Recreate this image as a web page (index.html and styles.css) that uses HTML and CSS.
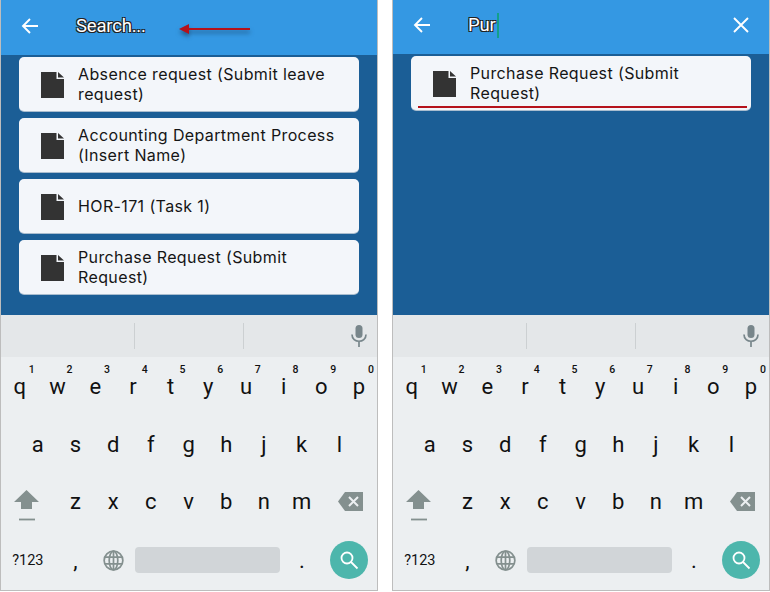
FILE: index.html
```html
<!DOCTYPE html>
<html>
	<head>
		<meta name="viewport" content="width=device-width, initial-scale=1.0">
		<title>Search forms</title>
		<link rel="stylesheet" href="styles.css">
	</head>
	<body>
	<div class="screens">

		<!-- empty search -->
		<div class="phone">
			<div class="top_bar tall_bar">
				<svg class="back_icon" viewBox="0 0 18 18"><path d="M17 9H2M9 2 2 9l7 7" fill="none" stroke="#fff" stroke-width="1.9"/></svg>
				<span class="search_text">Search...</span>
			</div>
			<svg class="red_arrow" viewBox="0 0 72 10"><path d="M71 5H8" stroke="#b5121b" stroke-width="1.8"/><path d="M0 5 10 0v10z" fill="#b5121b"/></svg>
			<div class="list_area">
				<div class="form_card"><svg class="doc_icon" viewBox="0 0 23 26"><path d="M0 0h15.5v7H23v19H0zM17 0l6 5.5h-6z" fill="#333"/></svg><span>Absence request (Submit leave request)</span></div>
				<div class="form_card"><svg class="doc_icon" viewBox="0 0 23 26"><path d="M0 0h15.5v7H23v19H0zM17 0l6 5.5h-6z" fill="#333"/></svg><span>Accounting Department Process (Insert Name)</span></div>
				<div class="form_card"><svg class="doc_icon" viewBox="0 0 23 26"><path d="M0 0h15.5v7H23v19H0zM17 0l6 5.5h-6z" fill="#333"/></svg><span>HOR-171 (Task 1)</span></div>
				<div class="form_card"><svg class="doc_icon" viewBox="0 0 23 26"><path d="M0 0h15.5v7H23v19H0zM17 0l6 5.5h-6z" fill="#333"/></svg><span>Purchase Request (Submit Request)</span></div>
			</div>
			<div class="keyboard">
				<div class="suggest_bar">
					<span class="suggest_cell first_cell"></span><span class="suggest_cell second_cell"></span>
					<span class="suggest_cell"><svg class="mic_icon" viewBox="0 0 16 22"><rect x="4.5" y="0" width="7" height="13" rx="3.5" fill="#78868b"/><path d="M1 9.5c0 9 14 9 14 0M8 16v6" fill="none" stroke="#78868b" stroke-width="1.7"/></svg></span>
				</div>
				<div class="key_row">
					<span class="key"><sup>1</sup>q</span><span class="key"><sup>2</sup>w</span><span class="key"><sup>3</sup>e</span><span class="key"><sup>4</sup>r</span><span class="key"><sup>5</sup>t</span><span class="key"><sup>6</sup>y</span><span class="key"><sup>7</sup>u</span><span class="key"><sup>8</sup>i</span><span class="key"><sup>9</sup>o</span><span class="key"><sup>0</sup>p</span>
				</div>
				<div class="key_row middle_row">
					<span class="key">a</span><span class="key">s</span><span class="key">d</span><span class="key">f</span><span class="key">g</span><span class="key">h</span><span class="key">j</span><span class="key">k</span><span class="key">l</span>
				</div>
				<div class="key_row third_row">
					<span class="key wide_left"><svg class="shift_icon" viewBox="0 0 25 31"><path d="M12.5 0 25 12h-7v7H7v-7H0z" fill="#84908f"/><path d="M5 29.5h16" stroke="#84908f" stroke-width="1.8"/></svg></span>
					<span class="key">z</span><span class="key">x</span><span class="key">c</span><span class="key">v</span><span class="key">b</span><span class="key">n</span><span class="key">m</span>
					<span class="key wide_right"><svg class="del_icon" viewBox="0 0 25 19"><path d="M7 0h18v19H7L0 9.5z" fill="#84908f"/><path d="m11 5 9 9m0-9-9 9" stroke="#eceff1" stroke-width="2"/></svg></span>
				</div>
				<div class="key_row bottom_row">
					<span class="key wide_left small_key">?123</span>
					<span class="key">,</span>
					<span class="key"><svg class="globe_icon" viewBox="0 0 22 22"><g fill="none" stroke="#84908f" stroke-width="1.8"><circle cx="11" cy="11" r="9.8"/><ellipse cx="11" cy="11" rx="4.5" ry="9.8"/><path d="M11 1v20M2 7.5h18M2 14.5h18"/></g></svg></span>
					<span class="space_key"></span>
					<span class="key">.</span>
					<span class="key search_key"><span class="search_btn"><svg viewBox="0 0 20 20"><circle cx="8" cy="8" r="5.5" fill="none" stroke="#fff" stroke-width="1.8"/><path d="m12 12 6.5 6.5" stroke="#fff" stroke-width="1.8"/></svg></span></span>
				</div>
			</div>
		</div>

		<!-- typed search -->
		<div class="phone">
			<div class="top_bar">
				<svg class="back_icon" viewBox="0 0 18 18"><path d="M17 9H2M9 2 2 9l7 7" fill="none" stroke="#fff" stroke-width="1.9"/></svg>
				<span class="search_text">Pur</span><span class="caret"></span>
				<svg class="close_icon" viewBox="0 0 16 16"><path d="m1 1 14 14M15 1 1 15" stroke="#fff" stroke-width="1.9"/></svg>
			</div>
			<div class="list_area">
				<div class="form_card underlined"><svg class="doc_icon" viewBox="0 0 23 26"><path d="M0 0h15.5v7H23v19H0zM17 0l6 5.5h-6z" fill="#333"/></svg><span>Purchase Request (Submit Request)</span></div>
			</div>
			<div class="keyboard">
				<div class="suggest_bar">
					<span class="suggest_cell first_cell"></span><span class="suggest_cell second_cell"></span>
					<span class="suggest_cell"><svg class="mic_icon" viewBox="0 0 16 22"><rect x="4.5" y="0" width="7" height="13" rx="3.5" fill="#78868b"/><path d="M1 9.5c0 9 14 9 14 0M8 16v6" fill="none" stroke="#78868b" stroke-width="1.7"/></svg></span>
				</div>
				<div class="key_row">
					<span class="key"><sup>1</sup>q</span><span class="key"><sup>2</sup>w</span><span class="key"><sup>3</sup>e</span><span class="key"><sup>4</sup>r</span><span class="key"><sup>5</sup>t</span><span class="key"><sup>6</sup>y</span><span class="key"><sup>7</sup>u</span><span class="key"><sup>8</sup>i</span><span class="key"><sup>9</sup>o</span><span class="key"><sup>0</sup>p</span>
				</div>
				<div class="key_row middle_row">
					<span class="key">a</span><span class="key">s</span><span class="key">d</span><span class="key">f</span><span class="key">g</span><span class="key">h</span><span class="key">j</span><span class="key">k</span><span class="key">l</span>
				</div>
				<div class="key_row third_row">
					<span class="key wide_left"><svg class="shift_icon" viewBox="0 0 25 31"><path d="M12.5 0 25 12h-7v7H7v-7H0z" fill="#84908f"/><path d="M5 29.5h16" stroke="#84908f" stroke-width="1.8"/></svg></span>
					<span class="key">z</span><span class="key">x</span><span class="key">c</span><span class="key">v</span><span class="key">b</span><span class="key">n</span><span class="key">m</span>
					<span class="key wide_right"><svg class="del_icon" viewBox="0 0 25 19"><path d="M7 0h18v19H7L0 9.5z" fill="#84908f"/><path d="m11 5 9 9m0-9-9 9" stroke="#eceff1" stroke-width="2"/></svg></span>
				</div>
				<div class="key_row bottom_row">
					<span class="key wide_left small_key">?123</span>
					<span class="key">,</span>
					<span class="key"><svg class="globe_icon" viewBox="0 0 22 22"><g fill="none" stroke="#84908f" stroke-width="1.8"><circle cx="11" cy="11" r="9.8"/><ellipse cx="11" cy="11" rx="4.5" ry="9.8"/><path d="M11 1v20M2 7.5h18M2 14.5h18"/></g></svg></span>
					<span class="space_key"></span>
					<span class="key">.</span>
					<span class="key search_key"><span class="search_btn"><svg viewBox="0 0 20 20"><circle cx="8" cy="8" r="5.5" fill="none" stroke="#fff" stroke-width="1.8"/><path d="m12 12 6.5 6.5" stroke="#fff" stroke-width="1.8"/></svg></span></span>
				</div>
			</div>
		</div>

	</div>
	</body>
</html>
```

FILE: styles.css
```css
html, body
{
	margin: 0;
	background: #fff;
}
.screens
{
	display: flex;
	justify-content: space-between;
	width: 770px;
	height: 592px;
	overflow: hidden;
}
.phone
{
	position: relative;
	display: flex;
	flex-direction: column;
	width: 378px;
	height: 591px;
	box-sizing: border-box;
	border: 1px solid #bdbdbd;
	border-top: none;
	font-family: Roboto, sans-serif;
}
.top_bar
{
	display: flex;
	align-items: center;
	height: 54px;
	flex: none;
	background: #3498e3;
	padding-bottom: 4px;
	box-sizing: border-box;
}
.tall_bar
{
	height: 55px;
	padding-bottom: 3px;
}
.back_icon
{
	width: 18px;
	height: 18px;
	margin-left: 20px;
}
.search_text
{
	margin-left: 37px;
	font-size: 18.5px;
	letter-spacing: -0.2px;
	color: #fff;
	text-shadow: -1px -1px 0 #222, 1px -1px 0 #222, -1px 1px 0 #222, 1px 1px 0 #222;
}
.caret
{
	width: 2px;
	height: 25px;
	margin-left: 1px;
	background: #12a08a;
}
.close_icon
{
	width: 16px;
	height: 16px;
	margin-left: auto;
	margin-right: 20px;
}
.red_arrow
{
	position: absolute;
	left: 178px;
	top: 24px;
	width: 72px;
	height: 10px;
	filter: drop-shadow(0 3px 2px rgba(20, 50, 80, 0.6));
}
.list_area
{
	flex: 1;
	display: flex;
	flex-direction: column;
	gap: 7px;
	padding: 2px 18px 0;
	background: #1b5e96;
}
.form_card
{
	position: relative;
	display: flex;
	align-items: center;
	height: 54px;
	box-sizing: border-box;
	background: #f3f6fa;
	border-radius: 5px;
	box-shadow: 0 1px 0 #a9bdcf;
	font-family: Inter, sans-serif;
	font-size: 16px;
	line-height: 20px;
	letter-spacing: 0.38px;
	color: #151515;
	padding-right: 18px;
}
.underlined::after
{
	content: "";
	position: absolute;
	left: 7px;
	right: 4px;
	bottom: 2px;
	height: 2px;
	background: #b5121b;
}
.doc_icon
{
	flex: none;
	width: 23px;
	height: 26px;
	margin: 2px 14px 0 22px;
}
.keyboard
{
	flex: none;
	height: 275px;
	background: #eceff1;
	color: #111;
}
.suggest_bar
{
	display: flex;
	height: 42px;
	background: #e4e7e9;
	align-items: center;
}
.suggest_cell
{
	display: flex;
	align-items: center;
	justify-content: flex-end;
	height: 26px;
	flex: 1;
	padding-right: 10px;
}
.first_cell
{
	flex: none;
	width: 133px;
	padding: 0;
	border-right: 1px solid #ccd0d2;
}
.second_cell
{
	flex: none;
	width: 108px;
	padding: 0;
	border-right: 1px solid #ccd0d2;
}
.mic_icon
{
	width: 16px;
	height: 22px;
}
.key_row
{
	display: flex;
	height: 58px;
	font-size: 22px;
}
.middle_row
{
	padding-left: 18px;
}
.third_row
{
	height: 56px;
	padding-bottom: 2px;
}
.key
{
	position: relative;
	flex: none;
	width: 37.7px;
	display: flex;
	align-items: center;
	justify-content: center;
}
.key sup
{
	position: absolute;
	top: 7px;
	right: 4px;
	font-size: 10.5px;
	font-weight: 500;
	line-height: 12px;
}
.wide_left
{
	width: 55.6px;
	padding-right: 5px;
	box-sizing: border-box;
}
.wide_right
{
	width: 56px;
	padding-left: 4px;
	box-sizing: border-box;
}
.shift_icon
{
	width: 25px;
	height: 31px;
	margin-top: 8px;
}
.del_icon
{
	width: 25px;
	height: 19px;
}
.bottom_row
{
	align-items: center;
}
.small_key
{
	font-size: 14.5px;
	padding-right: 2px;
}
.globe_icon
{
	width: 21px;
	height: 21px;
}
.space_key
{
	width: 145px;
	height: 26px;
	margin: 0 3px;
	background: #d1d5d8;
	border-radius: 4px;
}
.search_key
{
	width: 56px;
}
.search_btn
{
	display: flex;
	align-items: center;
	justify-content: center;
	flex: none;
	width: 38px;
	height: 38px;
	border-radius: 50%;
	background: #4db6ac;
}
.search_btn svg
{
	width: 20px;
	height: 20px;
}
```
